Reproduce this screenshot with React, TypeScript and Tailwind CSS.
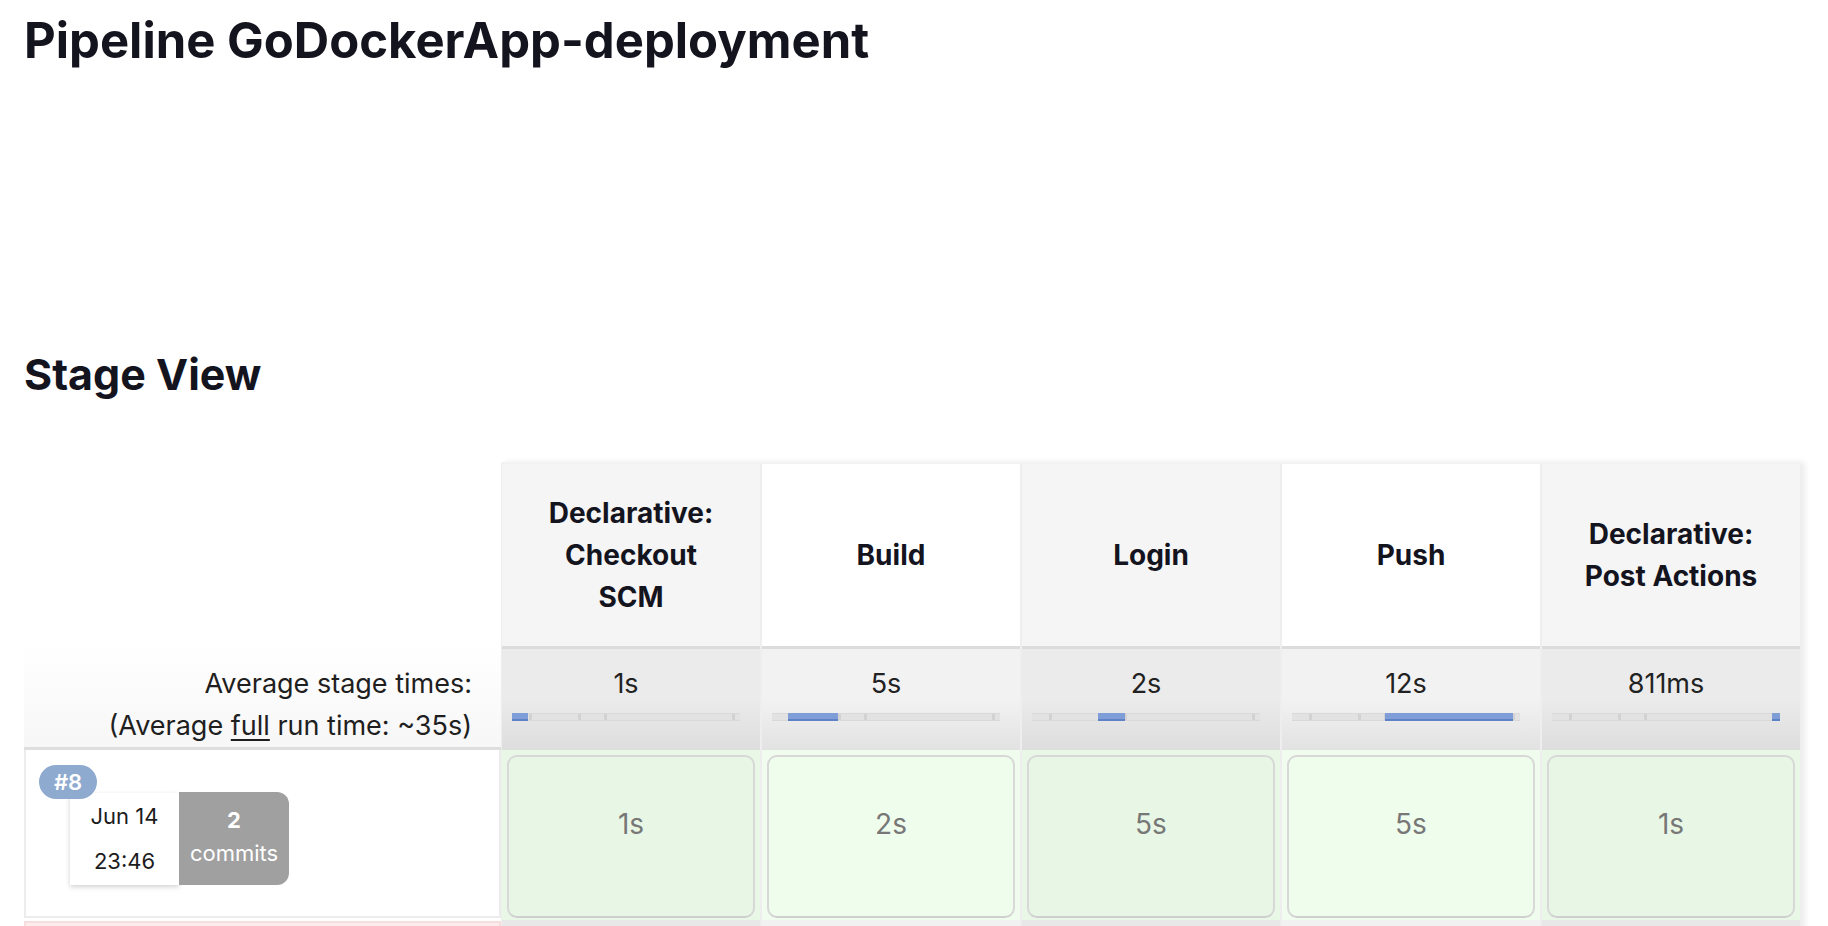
import React from 'react';

type Stage = {
  name: string[];
  avg: string;
  from: number;
  to: number;
  build: string;
};

const stages: Stage[] = [
  { name: ['Declarative:', 'Checkout', 'SCM'], avg: '1s', from: 0, to: 7, build: '1s' },
  { name: ['Build'], avg: '5s', from: 7, to: 29, build: '2s' },
  { name: ['Login'], avg: '2s', from: 29, to: 41, build: '5s' },
  { name: ['Push'], avg: '12s', from: 41, to: 97, build: '5s' },
  { name: ['Declarative:', 'Post Actions'], avg: '811ms', from: 96.5, to: 100, build: '1s' },
];

const ticks = [7.5, 29, 40.5, 96.5];

function TimeBar({ from, to }: { from: number; to: number }) {
  return (
    <div className="relative h-[8px] w-full bg-[#e2e2e2] border-y border-[#d9d9d9]">
      {ticks.map((t) => (
        <div key={t} className="absolute top-0 h-full w-[3px] bg-[#d2d2d2]" style={{ left: `${t}%` }} />
      ))}
      <div
        className="absolute -top-[1px] h-[8px] bg-[#7f9ed8] border-b-2 border-[#5f82c6]"
        style={{ left: `${from}%`, width: `${to - from}%` }}
      />
    </div>
  );
}

export default function App() {
  return (
    <div className="min-h-screen bg-white text-[#14141f] font-['Inter','Noto_Sans',sans-serif] overflow-hidden">
      <div className="px-[24px]">
        <h1 className="text-[49px] leading-[58px] font-bold mt-[12px]">Pipeline GoDockerApp-deployment</h1>

        <h2 className="text-[43px] leading-[52px] font-bold mt-[278px]">Stage View</h2>

        <div className="flex mt-[62px]">
          {/* left column: run info */}
          <div className="w-[477px] flex flex-col">
            <div className="h-[184px]" />
            <div className="h-[104px] flex flex-col items-end justify-start pr-[29px] pt-[17px] bg-gradient-to-b from-white to-[#f7f7f7] border-b-[3px] border-[#dedede] text-[27px] leading-[42px] text-[#1f1f1f]">
              <span>Average stage times:</span>
              <span>
                (Average <span className="underline underline-offset-4">full</span> run time: ~35s)
              </span>
            </div>
            <div className="relative h-[168px] border-x-2 border-b-2 border-[#ececec] bg-white pl-[44px] pt-[43px]">
              <div className="absolute left-[13px] top-[15px] z-10 h-[34px] w-[58px] rounded-full bg-[#8eaacf] flex items-center justify-center text-white text-[22px] font-semibold">
                #8
              </div>
              <div className="flex">
                <div className="w-[109px] h-[92px] bg-white shadow-[0_2px_5px_rgba(0,0,0,0.18)] flex flex-col items-center justify-center text-[22px] leading-[45px] text-[#1c1c1c]">
                  <span>Jun 14</span>
                  <span>23:46</span>
                </div>
                <div className="w-[110px] h-[93px] -mt-[1px] bg-[#a0a0a0] rounded-r-[12px] flex flex-col items-center justify-center pb-[4px] text-white text-[22px] leading-[33px]">
                  <span className="font-bold">2</span>
                  <span>commits</span>
                </div>
              </div>
            </div>
            <div className="h-[20px] mt-[3px] bg-[#fdecec] border-x-2 border-t-2 border-[#f6dede]" />
          </div>

          {/* stage columns */}
          <div className="flex border-t-2 border-[#f2f2f2] shadow-[4px_0_6px_rgba(0,0,0,0.08)]">
            {stages.map((s, i) => {
              const odd = i % 2 === 0;
              return (
                <div key={i} className="w-[260px] flex flex-col border-x border-[#eeeeee]">
                  <div
                    className={`h-[182px] flex flex-col items-center justify-center text-[28px] leading-[42px] font-bold text-[#14141f] ${odd ? 'bg-[#f5f5f5]' : 'bg-white'}`}
                  >
                    {s.name.map((n) => (
                      <span key={n}>{n}</span>
                    ))}
                  </div>
                  <div
                    className={`h-[104px] border-t-[3px] border-[#dcdcdc] px-[10px] pr-[20px] pt-[19px] bg-gradient-to-b ${odd ? 'from-[#ebebeb] via-[#ebebeb] to-[#dddddd]' : 'from-[#f2f2f2] via-[#f2f2f2] to-[#e2e2e2]'}`}
                  >
                    <div className="text-center text-[27px] leading-[32px] text-[#222222]">{s.avg}</div>
                    <div className="mt-[13px]">
                      <TimeBar from={s.from} to={s.to} />
                    </div>
                  </div>
                  <div className={`h-[170px] p-[5px] pb-[2px] ${odd ? 'bg-[#e9f7e6]' : 'bg-[#f0fdee]'}`}>
                    <div
                      className={`h-full rounded-[10px] border-2 border-[#d8d8d8] border-b-[#cfcfcf] flex justify-center pt-[50px] text-[28px] leading-[34px] text-[#777777] ${odd ? 'bg-[#e8f7e5]' : 'bg-[#effdec]'}`}
                    >
                      {s.build}
                    </div>
                  </div>
                  <div className={`h-[20px] ${odd ? 'bg-[#e8e8e8]' : 'bg-[#f1f1f1]'}`} />
                </div>
              );
            })}
          </div>
        </div>
      </div>
    </div>
  );
}
